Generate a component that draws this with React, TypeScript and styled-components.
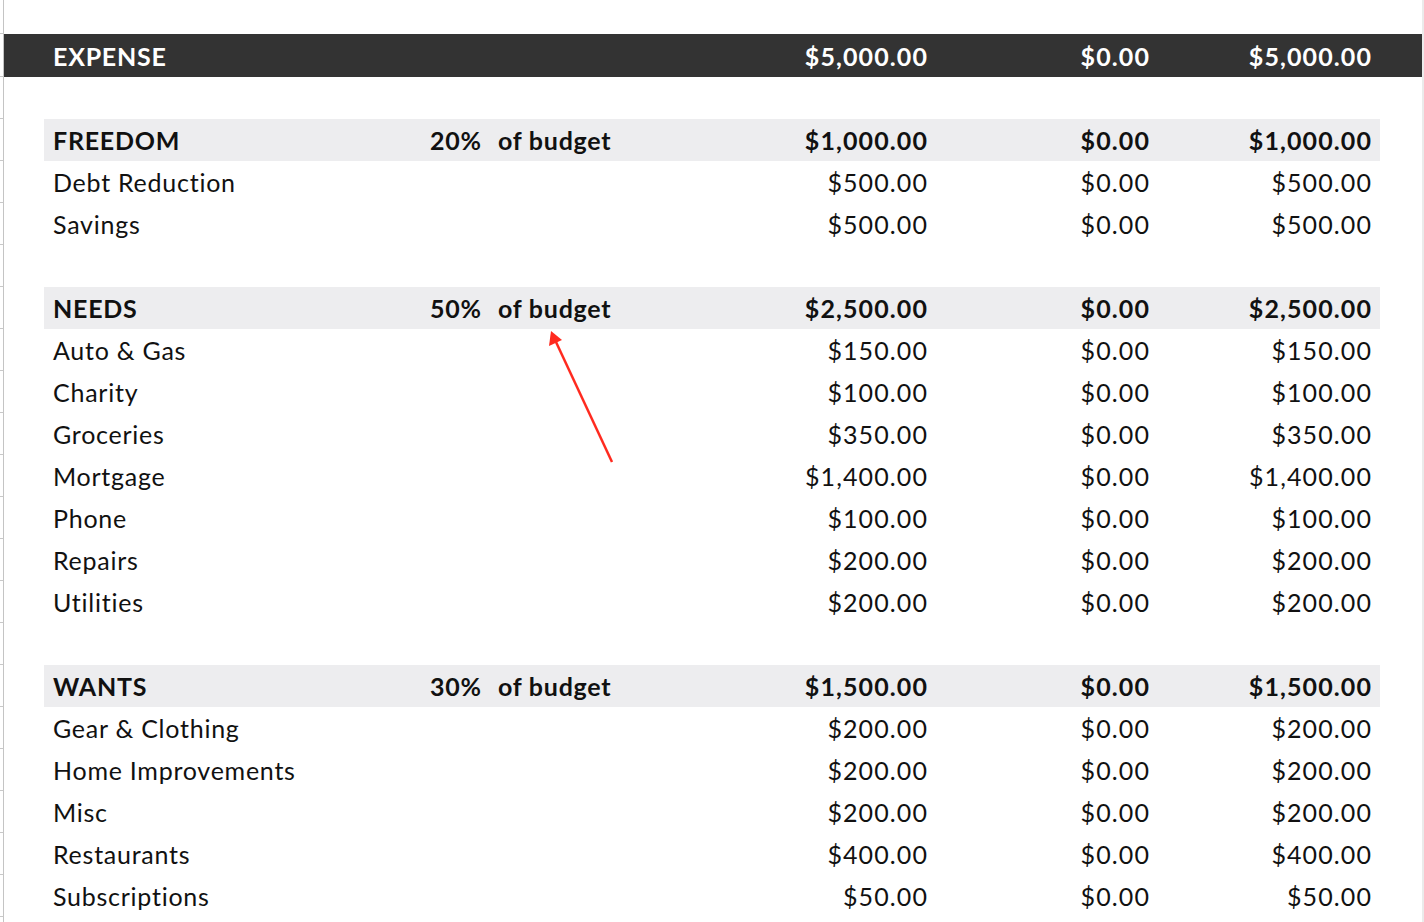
import React from "react";
import styled, { createGlobalStyle } from "styled-components";

const GlobalStyle = createGlobalStyle`
  html, body { margin: 0; padding: 0; background: #ffffff; }
  body { font-family: "Lato", "Open Sans", sans-serif; color: #111; overflow: hidden; }
`;

type Kind = "spacer" | "total" | "section" | "item" | "blank";

const Sheet = styled.div`
  position: relative;
  width: 1424px;
  height: 922px;
  overflow: hidden;
`;

const Row = styled.div<{ $h: number }>`
  display: flex;
  height: ${(p) => p.$h}px;
`;

const Gutter = styled.div`
  width: 4px;
  box-sizing: border-box;
  border-right: 1.5px solid #c4c4c4;
  border-bottom: 1px solid #c8c8c8;
`;

const RightEdge = styled.div`
  width: 2px;
  background: #ebebeb;
`;

const RowBody = styled.div<{ $dark: boolean }>`
  flex: 1;
  display: grid;
  grid-template-columns: 40px 1336px 42px;
  background: ${(p) => (p.$dark ? "#333333" : "transparent")};
`;

const Band = styled.div<{ $kind: Kind }>`
  grid-column: 2;
  display: grid;
  grid-template-columns: 377px 68px 225px 222px 222px 222px;
  align-items: center;
  background: ${(p) => (p.$kind === "section" ? "#ededef" : "transparent")};
  color: ${(p) => (p.$kind === "total" ? "#ffffff" : "#111111")};
  font-weight: ${(p) => (p.$kind === "item" ? 400 : 700)};
  font-size: 25px;
  letter-spacing: 0.75px;
`;

const Cell = styled.div`
  padding: 0 9px;
  white-space: nowrap;
`;

const Amount = styled(Cell)`
  text-align: right;
  letter-spacing: 1.1px;
  padding-right: 8px;
`;

const Arrow = styled.svg`
  position: absolute;
  left: 540px;
  top: 325px;
  width: 80px;
  height: 145px;
  overflow: visible;
`;

type Line = { kind: Kind; label?: string; pct?: string; a?: string; b?: string; c?: string };

const lines: Line[] = [
  { kind: "spacer" },
  { kind: "total", label: "EXPENSE", a: "$5,000.00", b: "$0.00", c: "$5,000.00" },
  { kind: "blank" },
  { kind: "section", label: "FREEDOM", pct: "20%", a: "$1,000.00", b: "$0.00", c: "$1,000.00" },
  { kind: "item", label: "Debt Reduction", a: "$500.00", b: "$0.00", c: "$500.00" },
  { kind: "item", label: "Savings", a: "$500.00", b: "$0.00", c: "$500.00" },
  { kind: "blank" },
  { kind: "section", label: "NEEDS", pct: "50%", a: "$2,500.00", b: "$0.00", c: "$2,500.00" },
  { kind: "item", label: "Auto & Gas", a: "$150.00", b: "$0.00", c: "$150.00" },
  { kind: "item", label: "Charity", a: "$100.00", b: "$0.00", c: "$100.00" },
  { kind: "item", label: "Groceries", a: "$350.00", b: "$0.00", c: "$350.00" },
  { kind: "item", label: "Mortgage", a: "$1,400.00", b: "$0.00", c: "$1,400.00" },
  { kind: "item", label: "Phone", a: "$100.00", b: "$0.00", c: "$100.00" },
  { kind: "item", label: "Repairs", a: "$200.00", b: "$0.00", c: "$200.00" },
  { kind: "item", label: "Utilities", a: "$200.00", b: "$0.00", c: "$200.00" },
  { kind: "blank" },
  { kind: "section", label: "WANTS", pct: "30%", a: "$1,500.00", b: "$0.00", c: "$1,500.00" },
  { kind: "item", label: "Gear & Clothing", a: "$200.00", b: "$0.00", c: "$200.00" },
  { kind: "item", label: "Home Improvements", a: "$200.00", b: "$0.00", c: "$200.00" },
  { kind: "item", label: "Misc", a: "$200.00", b: "$0.00", c: "$200.00" },
  { kind: "item", label: "Restaurants", a: "$400.00", b: "$0.00", c: "$400.00" },
  { kind: "item", label: "Subscriptions", a: "$50.00", b: "$0.00", c: "$50.00" },
  { kind: "blank" },
];

const heightOf = (k: Kind) => (k === "spacer" ? 34 : k === "total" ? 43 : 42);

export default function App() {
  return (
    <Sheet>
      <GlobalStyle />
      {lines.map((l, i) => (
        <Row key={i} $h={heightOf(l.kind)}>
          <Gutter />
          <RowBody $dark={l.kind === "total"}>
            {l.kind !== "spacer" && l.kind !== "blank" && (
              <Band $kind={l.kind}>
                <Cell>{l.label}</Cell>
                <Cell>{l.pct ?? ""}</Cell>
                <Cell>{l.pct ? "of budget" : ""}</Cell>
                <Amount>{l.a}</Amount>
                <Amount>{l.b}</Amount>
                <Amount>{l.c}</Amount>
              </Band>
            )}
          </RowBody>
          <RightEdge />
        </Row>
      ))}
      <Arrow viewBox="540 325 80 145">
        <line x1="612" y1="462" x2="556" y2="342" stroke="#ff2a1f" strokeWidth="2.5" />
        <polygon points="551,331 549,346 562,340" fill="#ff2a1f" />
      </Arrow>
    </Sheet>
  );
}
